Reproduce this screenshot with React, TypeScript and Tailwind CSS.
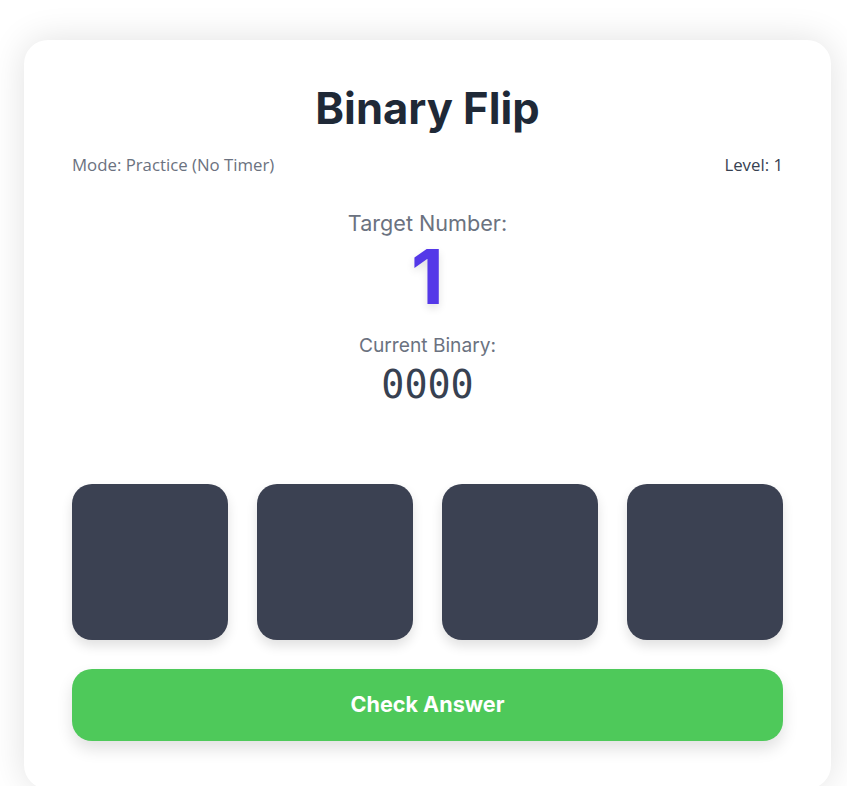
export default function App() {
  const bits = [0, 0, 0, 0]

  return (
    <div className="min-h-screen bg-white pt-10 pr-4 pl-6 font-['Inter',sans-serif]">
      <div className="rounded-3xl bg-white px-12 pt-[47px] pb-12 shadow-[0_0_36px_rgba(0,0,0,0.12)]">
        <h1 className="text-center text-[43.5px] leading-none font-bold text-[#1f2937]">Binary Flip</h1>

        <div className="mt-[22px] flex items-center justify-between font-['Open_Sans',sans-serif] text-[16.8px] leading-6">
          <span className="text-[#6b7280]">Mode: Practice (No Timer)</span>
          <span className="text-[#374151]">Level: 1</span>
        </div>

        <div className="mt-8 text-center">
          <p className="text-[21.6px] leading-7 text-[#6b7280]">Target Number:</p>
          <p className="mt-px text-[76px] leading-none font-bold text-[#5438e8] [text-shadow:0_4px_8px_rgba(0,0,0,0.12)]">
            1
          </p>
          <p className="mt-[17px] text-[19.2px] leading-7 text-[#6b7280]">Current Binary:</p>
          <p className="font-['DejaVu_Sans_Mono',monospace] text-[38.4px] leading-[52px] text-[#374151]">
            {bits.join('')}
          </p>
        </div>

        <div className="mt-[73px] grid grid-cols-4 gap-[29px]">
          {bits.map((b, i) => (
            <button
              key={i}
              className="aspect-square rounded-[20px] bg-[#3b4152] shadow-[0_6px_12px_rgba(0,0,0,0.12)]"
            />
          ))}
        </div>

        <button className="mt-[29px] h-[72px] w-full rounded-[20px] bg-[#4ec95a] text-[21.6px] font-bold text-white shadow-[0_8px_16px_rgba(0,0,0,0.12)]">
          Check Answer
        </button>
      </div>
    </div>
  )
}
